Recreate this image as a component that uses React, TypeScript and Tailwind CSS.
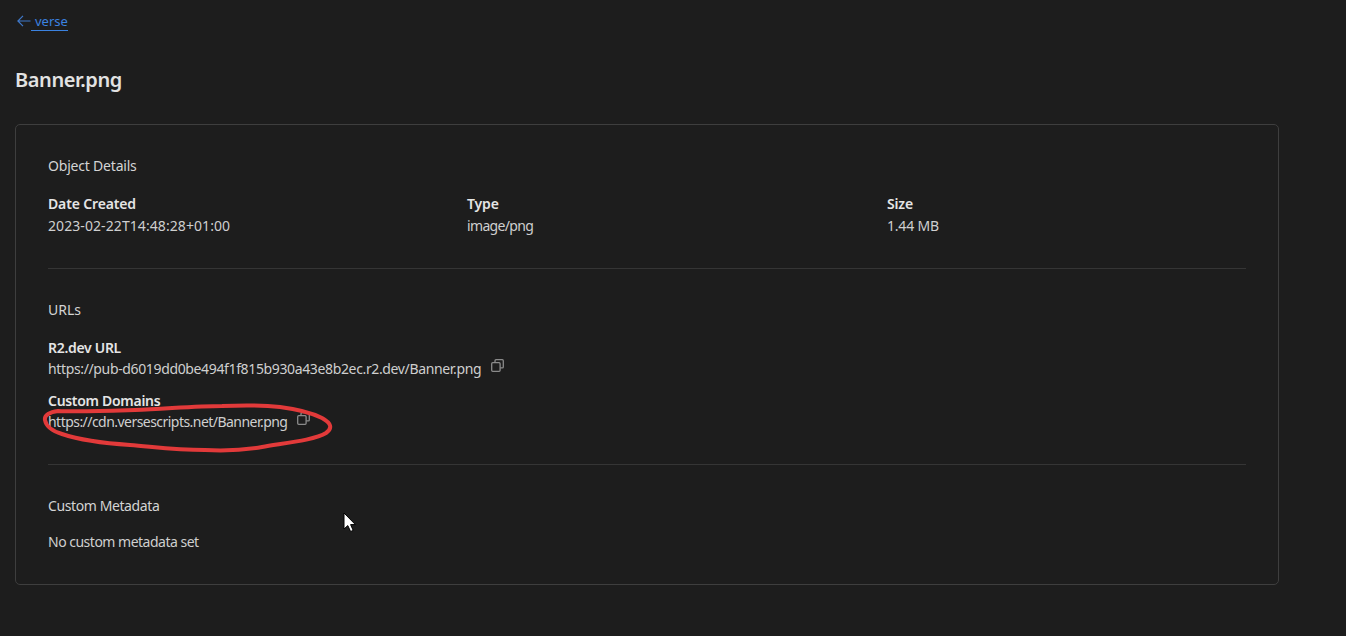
const font = { fontFamily: '"Noto Sans", "Open Sans", sans-serif' }

function Field({ label, value, spacing }: { label: string; value: string; spacing: string }) {
  return (
    <div>
      <div className="text-[14px] leading-[20px] font-semibold tracking-[-0.15px] text-[#e5e5e5]">{label}</div>
      <div className={`mt-[2px] text-[14px] leading-[20px] text-[#cfcfcf] ${spacing}`}>{value}</div>
    </div>
  )
}

function CopyIcon() {
  return (
    <svg width="13" height="13" viewBox="0 0 13 13" fill="none" stroke="#8a8a8a" strokeWidth="1.3" className="shrink-0">
      <rect x="0.7" y="3.7" width="8.4" height="8.6" rx="1" />
      <path d="M4 3.5V1.7a1 1 0 0 1 1-1h6.3a1 1 0 0 1 1 1v6.2a1 1 0 0 1-1 1H9.2" />
    </svg>
  )
}

function UrlRow({ label, url, spacing }: { label: string; url: string; spacing: string }) {
  return (
    <div>
      <div className="text-[14px] leading-[20px] font-semibold tracking-[-0.3px] text-[#e5e5e5]">{label}</div>
      <div className={`flex items-start text-[14px] leading-[20px] text-[#cfcfcf] mt-[1px] ${spacing}`}>
        <span>{url}</span>
        <span className="ml-[10px]">
          <CopyIcon />
        </span>
      </div>
    </div>
  )
}

export default function App() {
  return (
    <div className="relative w-[1346px] h-[636px] overflow-hidden bg-[#1d1d1d]" style={font}>
      <div className="pl-[15px] pt-[11px] w-[1279px]">
        <div className="flex items-center h-[20px]">
          <svg width="14" height="12" viewBox="0 0 14 12" fill="none" stroke="#3f78c9" strokeWidth="1.2" className="ml-[2px]">
            <path d="M13.5 6H1M6 0.8L0.9 6L6 11.2" />
          </svg>
          <span className="pl-[4px] border-b border-[#3b82e0] text-[13px] leading-[18px] text-[#3b82e0]">verse</span>
        </div>
        <h1 className="mt-[35px] text-[20px] leading-[28px] font-semibold tracking-[-0.4px] text-[#e2e2e2]">Banner.png</h1>
        <div className="mt-[30px] h-[461px] rounded-[5px] border border-[#3e3e3e] px-[32px] pt-[31px]">
          <div className="text-[14px] leading-[20px] tracking-[-0.2px] text-[#d4d4d4]">Object Details</div>
          <div className="mt-[18px] grid grid-cols-[419px_420px_1fr]">
            <Field label="Date Created" value="2023-02-22T14:48:28+01:00" spacing="tracking-[0.08px]" />
            <Field label="Type" value="image/png" spacing="tracking-[-0.65px]" />
            <Field label="Size" value="1.44 MB" spacing="tracking-[-0.2px]" />
          </div>
          <div className="mt-[32px] border-t border-[#353535]" />
          <div className="mt-[31px] text-[14px] leading-[20px] text-[#d4d4d4]">URLs</div>
          <div className="mt-[18px] flex flex-col gap-[12px]">
            <UrlRow label="R2.dev URL" url="https://pub-d6019dd0be494f1f815b930a43e8b2ec.r2.dev/Banner.png" spacing="tracking-[-0.36px]" />
            <UrlRow label="Custom Domains" url="https://cdn.versescripts.net/Banner.png" spacing="tracking-[-0.54px]" />
          </div>
          <div className="mt-[32px] border-t border-[#353535]" />
          <div className="mt-[31px] text-[14px] leading-[20px] tracking-[-0.4px] text-[#d4d4d4]">Custom Metadata</div>
          <div className="mt-[16px] text-[14px] leading-[20px] tracking-[-0.5px] text-[#cfcfcf]">No custom metadata set</div>
        </div>
      </div>

      {/* hand-drawn annotation */}
      <svg width="1346" height="636" viewBox="0 0 1346 636" fill="none" className="absolute inset-0 pointer-events-none">
        <path
          d="M58 411C50 412 44 415 45 420C46 426 52 431 62 434C80 440 100 443 130 445C155 447 175 450 205 450C225 451 245 450 262 447C285 443 315 440 326 433C333 428 331 423 322 418C310 412 296 409 280 407C262 405 245 405 222 406C195 406 165 409 135 410C105 411 80 412 58 411Z"
          stroke="#e23a3a"
          strokeWidth="4"
          strokeLinejoin="round"
        />
        <path
          d="M344 513V529L347.8 525.6L350.6 531.5L353.2 530.4L350.6 524.6H355.4Z"
          fill="#ffffff"
          stroke="#000000"
          strokeWidth="1"
        />
      </svg>
    </div>
  )
}
